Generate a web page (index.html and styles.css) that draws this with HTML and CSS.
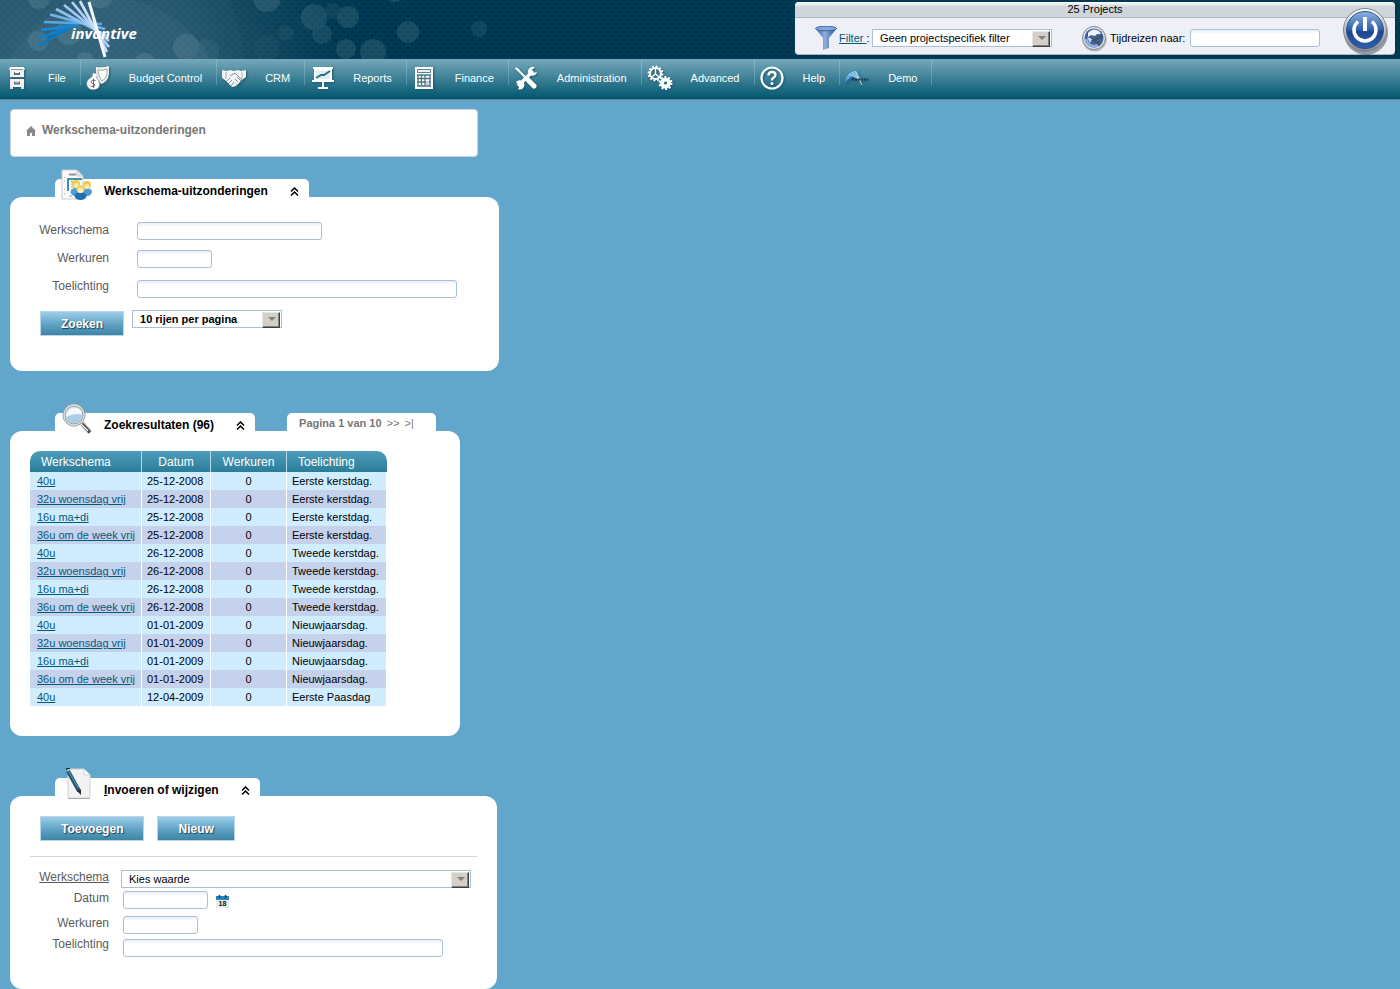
FILE: index.html
```html
<!DOCTYPE html>
<html lang="nl">
<head>
<meta charset="utf-8">
<title>Werkschema-uitzonderingen</title>
<link rel="stylesheet" href="styles.css">
</head>
<body>
<header class="banner">
  <svg class="banner-art" width="700" height="59" aria-hidden="true">
    <defs>
      <radialGradient id="glow" gradientUnits="userSpaceOnUse" cx="60" cy="90" r="290">
        <stop offset="0" stop-color="#86a8b8" stop-opacity=".36"/><stop offset=".5" stop-color="#86a8b8" stop-opacity=".26"/><stop offset="1" stop-color="#6f9aa8" stop-opacity="0"/>
      </radialGradient>
    </defs>
    <path d="M0 0H360V59H0Z" fill="url(#glow)"/>
    <circle cx="20" cy="80" r="225" fill="#7fa6ae" opacity=".04"/>
    <circle cx="110" cy="110" r="112" fill="#7f9fcf" opacity=".08"/>
    <g fill="#a8ccd0" opacity=".14">
      <circle cx="39" cy="-2" r="11"/><circle cx="100" cy="-6" r="14"/><circle cx="38" cy="41" r="10"/>
      <circle cx="69" cy="32" r="13"/><circle cx="85" cy="60" r="8"/><circle cx="145" cy="64" r="11"/>
      <circle cx="186" cy="47" r="13"/><circle cx="206" cy="52" r="13" opacity=".5"/><circle cx="267" cy="-2" r="14"/>
      <circle cx="267" cy="48" r="13" opacity=".3"/><circle cx="286" cy="33" r="8" opacity=".4"/>
      <circle cx="314" cy="17" r="13"/><circle cx="333" cy="11" r="8" opacity=".6"/><circle cx="322" cy="34" r="10" opacity=".8"/>
      <circle cx="348" cy="17" r="11"/><circle cx="346" cy="49" r="10"/><circle cx="373" cy="52" r="13"/>
      <circle cx="408" cy="32" r="11"/><circle cx="479" cy="29" r="8" opacity=".7"/><circle cx="395" cy="-8" r="10"/>
    </g>
  </svg>
  <svg class="logo" width="140" height="58" role="img" aria-label="invantive">
    <g stroke-width="2.7" fill="none">
      <path d="M39 46 70 27" stroke="#0a78c4"/>
      <path d="M39 38 78 24" stroke="#0c80cf"/>
      <path d="M41 30 78 25" stroke="#1588d6"/>
      <path d="M44 22 102 24" stroke="#5ba6e6"/>
      <path d="M50 14.500 105 29" stroke="#74b2ee"/>
      <path d="M56 9 107 36" stroke="#8fc0f2"/>
      <path d="M64 5 109 41" stroke="#a2c9f5"/>
      <path d="M72 2 109 47" stroke="#b4d3f8"/>
      <path d="M80 1 107 52" stroke="#c9def9"/>
      <path d="M89 2 105 57" stroke="#f4f8ff" stroke-width="3"/>
    </g>
    <text class="logo-text" x="71" y="39">invantive</text>
  </svg>
  <form class="toolbox">
    <p class="toolbox-title">25 Projects</p>
    <div class="toolbox-row">
      <svg width="22" height="25" viewBox="0 0 22 25" aria-hidden="true">
        <defs><linearGradient id="fun"><stop offset="0" stop-color="#2f5ba4"/><stop offset=".45" stop-color="#8fb0de"/><stop offset="1" stop-color="#234a92"/></linearGradient></defs>
        <path d="M0 2 8 12V24L14 22V12L22 2Z" fill="url(#fun)"/>
        <ellipse cx="11" cy="2.500" rx="10.500" ry="2.300" fill="#87a9da" stroke="#3c66a8"/>
      </svg>
      <label class="filter-label" for="filter"><a href="#">Filter&nbsp;</a>:</label>
      <span class="picker picker-filter"><select id="filter"><option>Geen projectspecifiek filter</option></select></span>
      <svg class="clock" width="27" height="27" viewBox="0 0 27 27" aria-hidden="true">
        <circle cx="13.500" cy="14.500" r="12" fill="#8b9099" opacity=".6"/>
        <circle cx="13" cy="13" r="11.500" fill="#dfe3ea" stroke="#7f8692"/>
        <circle cx="13" cy="13" r="9.500" fill="#3d629c"/>
        <path d="M5 14a8 8 0 0 0 12 6" fill="none" stroke="#8eaede" stroke-width="3"/>
        <path d="M7 8Q12 2 18 6L20 9 16 9 14 11 10 10 7 12Z" fill="#f1f5fb"/>
        <path d="M22 11 13 15 19 20" fill="none" stroke="#4c4f56" stroke-width="2"/>
        <path d="M6 12 11 14 9 18Z" fill="#c9d8ee"/>
      </svg>
      <label for="travel">Tijdreizen naar:</label>
      <input id="travel" class="text text-travel" type="text">
    </div>
    <button class="power" type="button" aria-label="Afmelden">
      <svg width="50" height="50" viewBox="0 0 50 50" aria-hidden="true">
        <defs>
          <linearGradient id="rim" x2="0" y2="1"><stop offset="0" stop-color="#fff"/><stop offset="1" stop-color="#7f858f"/></linearGradient>
          <linearGradient id="orb" x2="0" y2="1"><stop offset="0" stop-color="#8cb4e2"/><stop offset=".5" stop-color="#2f5fa8"/><stop offset=".55" stop-color="#1d4790"/><stop offset="1" stop-color="#2d5fae"/></linearGradient>
        </defs>
        <circle cx="26" cy="27" r="22" fill="#30353e" opacity=".45"/>
        <circle cx="25" cy="24" r="21.500" fill="url(#rim)" stroke="#7d8590"/>
        <circle cx="25" cy="24" r="18.500" fill="url(#orb)" stroke="#31508a"/>
        <path d="M18 15.500a11 11 0 1 0 14 0" fill="none" stroke="#fff" stroke-width="3.500"/>
        <path d="M25 11V25" stroke="#fff" stroke-width="4"/>
      </svg>
    </button>
  </form>
</header>

<nav class="menu">
  <a href="#"><svg width="16" height="24" viewBox="0 0 16 24" aria-hidden="true"><path d="M1 1h14l1 3H0Z" fill="#fff"/><path d="M1 4h14v7H1ZM1 13h14v8H1Z" fill="#f3f3f3"/><path d="M1 11.500h14" stroke="#466a7b"/><path d="M2 3.500h12" stroke="#799"/><path d="M5 6h6v3H5ZM5 15.500h6v3H5Z" fill="#57707c"/><path d="M6 6h4v1H6ZM6 15.500h4v1H6Z" fill="#fff"/><path d="M1 21h3v2H1ZM12 21h3v2h-3Z" fill="#ddd"/></svg><span>File</span></a>
  <a href="#"><svg width="24" height="24" viewBox="0 0 24 24" aria-hidden="true"><path d="M10 1Q17 2 23 0V8Q22 16 15 18L10 10Z" fill="#f0f0f0"/><path d="M12 4Q17 5 21 3V8Q20 13 16 15L13 10Z" fill="#fff" stroke="#9aa"/><path d="M7 7 6 11Q0 14 1 19 2 23.500 7 23.500 13 23.500 13.500 19 13.500 14 10 11L13 8Z" fill="#fff" stroke="#aab" stroke-width=".6"/><path d="M9.500 14.500Q5 13.500 5 16 5.500 17.500 8 18 10 19 8 20.500 6 21 4.500 20M7.500 12.500V22" fill="none" stroke="#667"/></svg><span>Budget Control</span></a>
  <a href="#"><svg width="24" height="20" viewBox="0 0 24 20" aria-hidden="true"><path d="M0 2 5 3 8 2 12 3 16 2 19 3 24 2V9L20 12 14 18 10 19 3 12 0 10Z" fill="#f6f6f6"/><path d="M4 4V11M20 4V11" stroke="#9ab"/><path d="M8 8 13 5 20 12M13 11 16 14M15 9 19 13M4 14 8 10M6 16 10 12M9 18 12 14" fill="none" stroke="#6f8590" stroke-width=".9"/></svg><span>CRM</span></a>
  <a href="#"><svg width="22" height="22" viewBox="0 0 22 22" aria-hidden="true"><path d="M1 0h20v2H1ZM2 2h18v12H2ZM0 13h22v2H0ZM10 15h2v5h4v2H6v-2h4Z" fill="#fff"/><path d="M4 3.500h14v8.500H4Z" fill="#e2edf1"/><path d="M4 11 9 8 12 8 18 4" fill="none" stroke="#266e88" stroke-width="1.800"/></svg><span>Reports</span></a>
  <a href="#"><svg width="20" height="23" viewBox="0 0 20 23" aria-hidden="true"><path d="M1 0h18v22H1Z" fill="#fff"/><path d="M3.500 2.500h13v3h-13Z" fill="#e9eef0" stroke="#568091"/><path d="M3 8h14M3 11.500h14M3 15h14M3 19h14M4 8v11M7.500 8v11M11 8v11M16 8v11" stroke="#4b7688" stroke-width="1.300"/><path d="M12 14h3v4h-3Z" fill="#ccd"/></svg><span>Finance</span></a>
  <a href="#"><svg width="24" height="24" viewBox="0 0 24 24" aria-hidden="true"><path d="M3 3 14 14" stroke="#fff" stroke-width="2"/><path d="M2 1 5 3 6 6 1 3Z" fill="#fff"/><path d="M14 14 20 20" stroke="#fff" stroke-width="5" stroke-linecap="round"/><path d="M4 20 19 5" stroke="#fff" stroke-width="3.500"/><path d="M21 1.500A4.500 4.500 0 1 0 23 6L19 7 17 4.500ZM2 16.500A4.500 4.500 0 1 1 4 23L6 20 4 18Z" fill="#fff"/></svg><span>Administration</span></a>
  <a href="#"><svg width="26" height="26" viewBox="0 0 26 26" aria-hidden="true"><circle cx="8.500" cy="8.500" r="5.500" fill="none" stroke="#fff" stroke-width="2"/><circle cx="8.500" cy="8.500" r="7" fill="none" stroke="#fff" stroke-width="1.800" stroke-dasharray="2 1.660"/><path d="M8.500 9V3M8.500 9 5 12M8.500 9 12 12" stroke="#fff" stroke-width="1.300"/><circle cx="18.500" cy="18" r="3.500" fill="none" stroke="#fff" stroke-width="4"/><circle cx="18.500" cy="18" r="6" fill="none" stroke="#fff" stroke-width="2" stroke-dasharray="2 1.770"/></svg><span>Advanced</span></a>
  <a href="#"><svg width="24" height="24" viewBox="0 0 24 24" aria-hidden="true"><circle cx="12" cy="12" r="10.500" fill="none" stroke="#fff" stroke-width="2.200"/><path d="M8.500 9.500Q8.500 6 12 6 15.500 6 15.500 9 15.500 10.500 13.500 11.800 12 12.800 12 14.500" fill="none" stroke="#fff" stroke-width="2.400"/><circle cx="12" cy="17.500" r="1.500" fill="#fff"/></svg><span>Help</span></a>
  <a href="#"><svg width="24" height="16" viewBox="0 0 24 16" aria-hidden="true"><path d="M0 12Q2 3 8 1L12 1 16 10 9 6Q4 8 0 12Z" fill="#69aede"/><path d="M0 13 8 6" stroke="#127cc6" stroke-width="1.500"/><path d="M10 1 17 15M7 2 16 12M4 4 14 9" stroke="#b8dcf3"/><path d="M7 9.500 23 9.500" stroke="#20343e" stroke-width="2" stroke-dasharray="2 1"/></svg><span>Demo</span></a>
</nav>

<main class="page">
  <div class="crumbs">
    <svg width="10" height="10" viewBox="0 0 10 10" aria-hidden="true"><path d="M5 0 10 5H9V10H6V7H4V10H1V5H0Z" fill="#888"/></svg>
    <span>Werkschema-uitzonderingen</span>
  </div>

  <section class="panel panel-search">
    <div class="tabs">
      <h2 class="tab"><svg width="32" height="32" viewBox="0 0 32 32" aria-hidden="true"><path d="M1 1H16L22 7V30H1Z" fill="#fbfbfb" stroke="#c4c8cc"/><path d="M16 1V7H22" fill="#e2e5e8" stroke="#c4c8cc"/><path d="M8 5.500h7" stroke="#8d9298" stroke-width="2"/><path d="M7 22V10H21" fill="none" stroke="#3f91ae" stroke-width="2"/><path d="M10 12.500h7M10 15h4M10 18h4M3 8.500h1M3 12h1M3 20h1M3 25h1M8 27h3" stroke="#9aa0a6"/><ellipse cx="14.500" cy="23" rx="5" ry="4" fill="#4b9ed4"/><ellipse cx="26" cy="23" rx="5" ry="4" fill="#4b9ed4"/><circle cx="15" cy="15" r="4" fill="#f0cb45"/><circle cx="15.500" cy="16.500" r="2.500" fill="#fbe6b6"/><circle cx="26" cy="16" r="4" fill="#f0cb45"/><circle cx="26" cy="17.500" r="2.500" fill="#fbe6b6"/><ellipse cx="19.500" cy="27" rx="6" ry="4" fill="#2270b4"/><circle cx="19.500" cy="20" r="4" fill="#f4d75a"/><circle cx="19.500" cy="21.500" r="2.500" fill="#fdeec4"/></svg>
        <span>Werkschema-uitzonderingen</span>
        <button class="fold" type="button" aria-label="Inklappen"><svg width="9" height="9" viewBox="0 0 9 9"><path d="M1 4.500 4.500 1 8 4.500M1 8.500 4.500 5 8 8.500" fill="none" stroke="#000" stroke-width="1.500"/></svg></button></h2>
    </div>
    <form class="sheet">
      <div class="fields fields-search">
        <label for="s1">Werkschema</label><input id="s1" class="text text-scheme" type="text">
        <label for="s2">Werkuren</label><input id="s2" class="text text-hours" type="text">
        <label for="s3">Toelichting</label><input id="s3" class="text text-note" type="text">
      </div>
      <div class="actions">
        <button class="btn" type="button">Zoeken</button>
        <span class="picker picker-rows"><select aria-label="Rijen per pagina"><option>10 rijen per pagina</option></select></span>
      </div>
    </form>
  </section>

  <section class="panel panel-results">
    <div class="tabs">
      <h2 class="tab"><svg width="32" height="32" viewBox="0 0 32 32" aria-hidden="true"><path d="M20 19 28 28" stroke="#d5d5d5" stroke-width="5"/><path d="M21 21 29 29.500" stroke="#4d4d4d" stroke-width="3.500"/><path d="M19 20 27 28" stroke="#fff" stroke-width="1.200"/><circle cx="13" cy="12" r="10" fill="#d3e7f3" stroke="#8e9498" stroke-width="2.800"/><circle cx="13" cy="12" r="10" fill="none" stroke="#dfe2e4" stroke-width="1.300"/><path d="M5 14Q6 5 15 5 21 6 21 11 12 10 5 14Z" fill="#f3f9fc"/><path d="M5.500 14Q13 10 21 12 20 20 13 20 7 20 5.500 14Z" fill="#a9cfe6"/></svg>
        <span>Zoekresultaten (96)</span>
        <button class="fold" type="button" aria-label="Inklappen"><svg width="9" height="9" viewBox="0 0 9 9"><path d="M1 4.500 4.500 1 8 4.500M1 8.500 4.500 5 8 8.500" fill="none" stroke="#000" stroke-width="1.500"/></svg></button></h2>
      <div class="pager"><b>Pagina 1 van 10</b> <a href="#">&gt;&gt;</a> <a href="#">&gt;|</a></div>
    </div>
    <div class="sheet">
      <table class="results">
        <colgroup><col class="c-scheme"><col class="c-date"><col class="c-hours"><col class="c-note"></colgroup>
        <thead><tr><th>Werkschema</th><th>Datum</th><th>Werkuren</th><th>Toelichting</th></tr></thead>
        <tbody>
          <tr><td><a href="#">40u</a></td><td>25-12-2008</td><td>0</td><td>Eerste kerstdag.</td></tr>
          <tr><td><a href="#">32u woensdag vrij</a></td><td>25-12-2008</td><td>0</td><td>Eerste kerstdag.</td></tr>
          <tr><td><a href="#">16u ma+di</a></td><td>25-12-2008</td><td>0</td><td>Eerste kerstdag.</td></tr>
          <tr><td><a href="#">36u om de week vrij</a></td><td>25-12-2008</td><td>0</td><td>Eerste kerstdag.</td></tr>
          <tr><td><a href="#">40u</a></td><td>26-12-2008</td><td>0</td><td>Tweede kerstdag.</td></tr>
          <tr><td><a href="#">32u woensdag vrij</a></td><td>26-12-2008</td><td>0</td><td>Tweede kerstdag.</td></tr>
          <tr><td><a href="#">16u ma+di</a></td><td>26-12-2008</td><td>0</td><td>Tweede kerstdag.</td></tr>
          <tr><td><a href="#">36u om de week vrij</a></td><td>26-12-2008</td><td>0</td><td>Tweede kerstdag.</td></tr>
          <tr><td><a href="#">40u</a></td><td>01-01-2009</td><td>0</td><td>Nieuwjaarsdag.</td></tr>
          <tr><td><a href="#">32u woensdag vrij</a></td><td>01-01-2009</td><td>0</td><td>Nieuwjaarsdag.</td></tr>
          <tr><td><a href="#">16u ma+di</a></td><td>01-01-2009</td><td>0</td><td>Nieuwjaarsdag.</td></tr>
          <tr><td><a href="#">36u om de week vrij</a></td><td>01-01-2009</td><td>0</td><td>Nieuwjaarsdag.</td></tr>
          <tr><td><a href="#">40u</a></td><td>12-04-2009</td><td>0</td><td>Eerste Paasdag</td></tr>
        </tbody>
      </table>
    </div>
  </section>

  <section class="panel panel-edit">
    <div class="tabs">
      <h2 class="tab"><svg width="32" height="32" viewBox="0 0 32 32" aria-hidden="true"><path d="M7 1H23L29 7V30H7Z" fill="#f2f2f2" stroke="#cfd2d5"/><path d="M23 1V7H29" fill="#fff" stroke="#cfd2d5"/><path d="M7 30.500H29" stroke="#a9adb0"/><path d="M7 3 18 23" stroke="#24506c" stroke-width="4"/><path d="M7.500 3 17 20" stroke="#4f8fb0" stroke-width="1.200"/><path d="M16 23 20 21.500 20 27Z" fill="#15303f"/><path d="M5 1 9 0" stroke="#14303f" stroke-width="1.500"/></svg>
        <span><u>I</u>nvoeren of wijzigen</span>
        <button class="fold" type="button" aria-label="Inklappen"><svg width="9" height="9" viewBox="0 0 9 9"><path d="M1 4.500 4.500 1 8 4.500M1 8.500 4.500 5 8 8.500" fill="none" stroke="#000" stroke-width="1.500"/></svg></button></h2>
    </div>
    <form class="sheet">
      <div class="actions actions-edit">
        <button class="btn" type="button">Toevoegen</button>
        <button class="btn" type="button">Nieuw</button>
      </div>
      <div class="fields fields-edit">
        <label for="e1"><a href="#">Werkschema</a></label><span class="picker picker-scheme"><select id="e1"><option>Kies waarde</option></select></span>
        <label for="e2">Datum</label>
        <div class="date"><input id="e2" class="text text-date" type="text"><button class="calendar" type="button" aria-label="Kalender"><svg width="13" height="13" viewBox="0 0 13 13"><path d="M0 1h13v4H0Z" fill="#2585bd"/><path d="M0 5h13v8H0Z" fill="#e9ecee"/><path d="M3.500 0v3M9.500 0v3" stroke="#123f5c" stroke-width="1.500"/><text class="calendar-day" x="6.500" y="11" text-anchor="middle">18</text></svg></button></div>
        <label for="e3">Werkuren</label><input id="e3" class="text text-hours" type="text">
        <label for="e4">Toelichting</label><input id="e4" class="text text-note" type="text">
      </div>
    </form>
  </section>
</main>
</body>
</html>
```
FILE: styles.css
```css
* { box-sizing: border-box; }

body {
  margin: 0;
  background: #62a7cb;
  color: #000;
  font: 11px/16px "Liberation Sans", Arial, sans-serif;
}

a { color: #005a7c; }
p, h2 { margin: 0; }
svg { display: block; flex: none; }
button { font: inherit; cursor: pointer; }

/* Banner */
.banner {
  position: relative;
  display: flex;
  justify-content: space-between;
  height: 59px;
  overflow: hidden;
  background-color: #003a54;
  background-image:
    radial-gradient(circle, #002c42 1px, transparent 1px),
    radial-gradient(circle, #002c42 1px, transparent 1px);
  background-size: 8px 8px;
  background-position: 0 0, 4px 4px;
}
.banner-art { position: absolute; top: 0; left: 0; }
.logo { position: relative; }
.logo-text { font: italic bold 15px "Open Sans", sans-serif; fill: #fff; }

.toolbox {
  position: relative;
  width: 600px;
  margin: 2px 5px 4px;
  border-radius: 4px;
  background: #eeeff7;
  border-bottom: 1px solid #a9b3bc;
}
.toolbox-title {
  height: 16px;
  line-height: 15px;
  text-align: center;
  border-radius: 4px 4px 0 0;
  border-bottom: 1px solid #aab4bc;
  background: linear-gradient(#fff, #ced6dc 5px);
}
.toolbox-row { display: flex; align-items: center; height: 37px; padding: 3px 0 0 20px; }
.filter-label { width: 33px; margin-left: 2px; }
.clock { margin: 0 2px 0 29px; }
.power {
  position: absolute;
  top: 4px;
  right: 5px;
  padding: 0;
  border: 0;
  background: none;
}

/* Menu */
.menu {
  display: flex;
  height: 41px;
  padding-top: 1px;
  border-bottom: 1px solid #6e7f86;
  background: linear-gradient(#76a8bb, #00566e);
}
.menu a {
  display: flex;
  align-items: center;
  height: 36px;
  padding: 0 14px 0 5px;
  border: solid;
  border-image: linear-gradient(#8db8c8, #5491a6 68%, transparent 70%) 1;
  border-width: 0 1px 0 0;
  color: #fff;
  text-decoration: none;
}
.menu svg { filter: drop-shadow(1px 1px 1px #1f566a); }
.menu a:first-child { padding-left: 9px; }
.menu a svg { margin-right: 19px; }
.menu svg[width="16"] { margin-right: 23px; }
.menu svg[width="22"], .menu svg[width="20"] { margin-left: 2px; }
.menu svg[width="22"] { margin-right: 19px; }
.menu svg[width="20"] { margin-right: 21px; }
.menu svg[width="26"] { margin-right: 18px; }

/* Page */
.page { padding: 9px 10px 0; }
.crumbs {
  display: flex;
  align-items: flex-start;
  gap: 6px;
  max-width: 468px;
  min-height: 48px;
  padding: 12px 15px;
  border: 1px solid #cfd4da;
  border-radius: 4px;
  background: #fff;
  color: #777;
  font-size: 12px;
  font-weight: bold;
}
.crumbs svg { margin-top: 4px; }

.tabs { display: flex; align-items: flex-end; gap: 32px; padding-left: 45px; }
.tab {
  display: flex;
  align-items: center;
  height: 18px;
  padding: 6px 10px 0 6px;
  border-radius: 5px 5px 0 0;
  background: #fff;
  font-size: 12px;
}
.tab > svg { margin: -12px 11px 0 0; }
.fold { margin-left: 22px; padding: 0; border: 0; background: none; }
.pager {
  height: 18px;
  padding: 2px 22px 0 12px;
  border-radius: 5px 5px 0 0;
  background: #fff;
  color: #777;
}
.pager a { margin-left: 2px; color: #777; text-decoration: none; }

.panel-search { max-width: 489px; margin-top: 22px; }
.panel-results { max-width: 450px; margin-top: 42px; }
.panel-edit { max-width: 487px; margin-top: 42px; }
.sheet { position: relative; z-index: -1; padding: 20px; border-radius: 12px; background: #fff; }
.page { position: relative; z-index: 0; }
.panel-search .sheet { padding: 15px 20px 35px; }
.panel-results .sheet { padding-bottom: 30px; }
.panel-edit .sheet { padding-bottom: 32px; }

/* Fields */
.fields { display: grid; font-size: 12px; color: #5a5a5a; }
.fields label { text-align: right; }
.fields a { color: inherit; }
.fields-search {
  grid-template-columns: 79px 1fr;
  grid-auto-rows: 28px;
  column-gap: 28px;
  align-items: center;
}
.fields-search label { margin-bottom: -8px; }
.fields-search .text { margin-bottom: -10px; }
.fields-search .text-note { margin-bottom: -14px; }
.fields-edit {
  grid-template-columns: 79px 1fr;
  grid-template-rows: 21px 25px 21px 23px;
  column-gap: 14px;
  margin-top: 10px;
  line-height: 20px;
}
.fields-edit .text { margin-top: 3px; }
.fields-edit .text-note { margin-top: 5px; }
.fields-edit .picker { margin: 3px 0 0 -2px; }

.text {
  height: 18px;
  padding: 0 4px;
  border: 1px solid #a9c0d6;
  border-radius: 3px;
  background: linear-gradient(#e9eff8, #fff 4px);
  font: inherit;
}
.text-travel { width: 130px; margin-left: 5px; }
.text-scheme { width: 185px; }
.text-hours { width: 75px; }
.text-note { width: 320px; }
.text-date { width: 85px; }
.date { display: flex; align-items: flex-start; gap: 8px; }
.calendar { margin-top: 7px; padding: 0; border: 0; background: none; }
.calendar-day { font: bold 7px "Liberation Sans", sans-serif; fill: #111; }

/* Drop-downs */
.picker { position: relative; display: block; height: 18px; }
.picker select {
  display: block;
  width: 100%;
  height: 18px;
  padding: 1px 24px 0 7px;
  border: 1px solid #a9c0d6;
  border-radius: 0;
  background: #fff;
  color: #000;
  font: inherit;
  font-size: 11px;
  line-height: 15px;
  appearance: none;
}
.picker::before {
  content: "";
  position: absolute;
  top: 2px;
  right: 2px;
  width: 16px;
  height: 14px;
  border: 1px solid;
  border-color: #e8e6e0 #404040 #404040 #e8e6e0;
  background: #d4d0c8;
  box-shadow: inset -1px -1px #808080;
  pointer-events: none;
}
.picker::after {
  content: "";
  position: absolute;
  top: 7px;
  right: 6px;
  border: 4px solid transparent;
  border-top-color: #808080;
  border-bottom: 0;
  pointer-events: none;
}
.picker-filter { width: 180px; }
.picker-rows { width: 150px; font-weight: bold; }
.picker-scheme { width: 350px; }

/* Buttons */
.actions { display: flex; align-items: flex-start; gap: 8px; margin: 14px 0 0 10px; }
.actions .btn { margin-top: 1px; }
.actions-edit {
  gap: 13px;
  margin: 0;
  padding: 0 0 15px 10px;
  border-bottom: 1px solid #d4d4d4;
}
.actions-edit .btn { margin-top: 0; }
.btn {
  height: 25px;
  padding: 0 20px;
  border: 1px solid #b9d7e8;
  background: linear-gradient(#9dcdea, #5fa2c4 55%, #3e84a4);
  color: #fff;
  font-size: 12px;
  font-weight: bold;
  text-shadow: 1px 1px 1px #1d4258;
}

/* Results */
.results { table-layout: fixed; width: 357px; border-collapse: separate; border-spacing: 0; }
.c-scheme { width: 112px; }
.c-date { width: 69px; }
.c-hours { width: 76px; }
.c-note { width: 100px; }
.results th {
  height: 21px;
  padding: 0 11px;
  border-right: 1px solid #b5d8e5;
  background: linear-gradient(#4f9dbb, #2a7c99);
  color: #fff;
  font-size: 12px;
  font-weight: normal;
  text-align: left;
}
.results th:nth-child(2), .results th:nth-child(3) { padding: 0; text-align: center; }
.results th:first-child { border-top-left-radius: 10px; }
.results th:last-child { border-right: 0; border-top-right-radius: 10px; }
.results td {
  height: 18px;
  padding: 0 5px;
  border-right: 1px solid #fff;
  background: #d0ecff;
  white-space: nowrap;
}
.results td:first-child { padding-left: 7px; }
.results td:nth-child(3) { text-align: center; }
.results tr:nth-child(even) td { background: #c6d1eb; }
```
